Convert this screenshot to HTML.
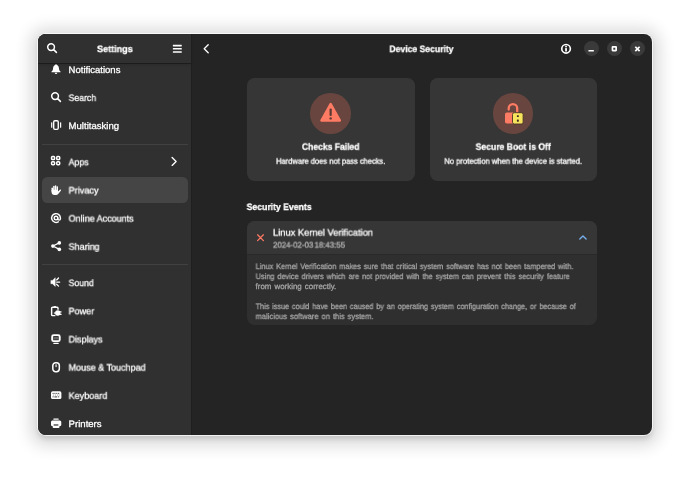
<!DOCTYPE html>
<html lang="en">
<head>
<meta charset="utf-8">
<title>Settings - Device Security</title>
<style>
html,body{margin:0;padding:0;background:#fff;}
body{width:690px;height:477px;position:relative;overflow:hidden;font-family:"Liberation Sans",sans-serif;}
#win{position:absolute;left:38px;top:33.8px;width:614.2px;height:400.8px;border-radius:8px;overflow:hidden;background:#242424;}
#shadow{position:absolute;left:38px;top:33.8px;width:614.2px;height:400.8px;border-radius:8px;
 box-shadow:0 0 0 1px rgba(255,255,255,.75),0 3.8px 4.8px 0 rgba(0,0,0,.116),0 2.3px 15.8px 8px rgba(0,0,0,.143);}
#side{position:absolute;left:0;top:0;width:153.3px;height:100%;background:#303030;}
#sidehead{position:absolute;left:0;top:0;width:153.3px;height:29.2px;background:#303030;box-shadow:0 1px 0 rgba(0,0,0,.35), 0 2px 3px rgba(0,0,0,.12);}
.sep{position:absolute;left:4.2px;width:145.6px;height:1px;background:#414141;}
#sel{position:absolute;left:3.8px;top:143px;width:146.4px;height:26.2px;border-radius:5.5px;background:#454545;}
.card{position:absolute;background:#363636;border-radius:7.5px;}
.circle{position:absolute;width:40.5px;height:40.5px;border-radius:50%;background:#68463f;}
.wb{position:absolute;width:15px;height:15px;border-radius:50%;background:#3a3a3a;top:41.05px;}
#txt{position:absolute;left:0;top:0;width:690px;height:477px;}
.t{text-rendering:geometricPrecision;position:absolute;left:0;top:0;white-space:nowrap;transform-origin:0 0;will-change:transform;-webkit-text-stroke:0.3px currentColor;}
svg{position:absolute;overflow:visible;}
</style>
</head>
<body>
<div id="shadow"></div>
<div id="win">
  <div id="side">
    <div id="sel"></div>
    <div class="sep" style="top:110px"></div>
    <div class="sep" style="top:230.5px"></div>
    <div id="sidehead"></div>
    <div style="position:absolute;left:153.3px;top:0;width:0.7px;height:100%;background:#1f1f1f"></div>
  </div>
</div>
<!-- content cards (page coords) -->
<div class="card" style="left:247px;top:78.3px;width:167.6px;height:102.4px"></div>
<div class="card" style="left:429.6px;top:78.3px;width:167.2px;height:102.4px"></div>
<div class="circle" style="left:310.45px;top:93.1px"></div>
<div class="circle" style="left:492.8px;top:93.1px"></div>
<div class="card" style="left:247px;top:220.8px;width:349.8px;height:104.3px;background:#2f2f2f"></div>
<div class="card" style="left:247px;top:220.8px;width:349.8px;height:33.4px;border-radius:7.5px 7.5px 0 0"></div>
<div style="position:absolute;left:247px;top:254.2px;width:349.8px;height:0.9px;background:#292929"></div>
<div class="wb" style="left:583.5px"></div>
<div class="wb" style="left:606.8px"></div>
<div class="wb" style="left:630.1px"></div>
<svg style="left:50.70px;top:63.70px;width:10.02px;height:10.02px" viewBox="0 0 16 16" fill="#fff" stroke="none"><path d="M8 0.2 C8.9 0.2 9.4 0.9 9.4 1.5 C11.6 2.2 12.5 4.4 12.7 6.8 C12.9 9.8 13.5 10.9 15.2 12.1 V13.1 H0.8 V12.1 C2.5 10.9 3.1 9.8 3.3 6.8 C3.5 4.4 4.4 2.2 6.6 1.5 C6.6 0.9 7.1 0.2 8 0.2 Z"/><path d="M6 14 H10 A2 2 0 0 1 6 14 Z"/></svg>
<svg style="left:50.70px;top:91.90px;width:10.02px;height:10.02px" viewBox="0 0 16 16" fill="#fff" stroke="none"><circle cx="6.5" cy="6.5" r="5.4" fill="none" stroke="#fff" stroke-width="2.4"/><path d="M10.6 10.6 L15 15" stroke="#fff" stroke-width="2.4" stroke-linecap="round" fill="none"/></svg>
<svg style="left:50.70px;top:120.10px;width:10.02px;height:10.02px" viewBox="0 0 16 16" fill="#fff" stroke="none"><rect x="4.3" y="1.1" width="7.3" height="13.8" rx="2" fill="none" stroke="#fff" stroke-width="2.2"/><rect x="0.2" y="3.6" width="1.9" height="8.8" rx="0.9"/><rect x="14.4" y="3.6" width="1.9" height="8.8" rx="0.9"/></svg>
<svg style="left:50.70px;top:156.45px;width:10.02px;height:10.02px" viewBox="0 0 16 16" fill="#fff" stroke="none"><rect x="0.9" y="0.9" width="4.8" height="4.8" rx="1.5" fill="none" stroke="#fff" stroke-width="2.4"/><rect x="0.9" y="9.1" width="4.8" height="4.8" rx="1.5" fill="none" stroke="#fff" stroke-width="2.4"/><rect x="9.1" y="0.9" width="4.8" height="4.8" rx="1.5" fill="none" stroke="#fff" stroke-width="2.4"/><rect x="9.1" y="9.1" width="4.8" height="4.8" rx="1.5" fill="none" stroke="#fff" stroke-width="2.4"/></svg>
<svg style="left:50.70px;top:184.65px;width:10.02px;height:10.02px" viewBox="0 0 16 16" fill="#fff" stroke="none"><rect x="0.9" y="4" width="2.3" height="7" rx="1.15"/><rect x="3.5" y="1.3" width="2.3" height="9" rx="1.15"/><rect x="6.2" y="0.4" width="2.3" height="9" rx="1.15"/><rect x="8.9" y="1.8" width="2.3" height="9" rx="1.15"/><path d="M0.9 7.5 H11.2 V10.2 L14.3 7.6 C15.2 6.9 16.6 7.9 15.7 9 L11.5 14.3 C10.6 15.4 9.6 16 8 16 H5.5 C2.7 16 0.9 14 0.9 11.5 Z"/></svg>
<svg style="left:50.70px;top:212.85px;width:10.02px;height:10.02px" viewBox="0 0 16 16" fill="#fff" stroke="none"><path d="M11.6 14 A7 7 0 1 1 15 8 V9.3 A2.1 2.1 0 0 1 10.8 9.3 V8" fill="none" stroke="#fff" stroke-width="2.3" stroke-linecap="round"/><circle cx="8" cy="8" r="2.9" fill="none" stroke="#fff" stroke-width="2.2"/></svg>
<svg style="left:50.70px;top:241.05px;width:10.02px;height:10.02px" viewBox="0 0 16 16" fill="#fff" stroke="none"><circle cx="3" cy="8.1" r="2.9"/><circle cx="13.3" cy="3" r="2.9"/><circle cx="13.3" cy="13.4" r="2.9"/><path d="M13.3 3 L3 8.1 L13.3 13.4" fill="none" stroke="#fff" stroke-width="1.9"/></svg>
<svg style="left:50.70px;top:277.40px;width:10.02px;height:10.02px" viewBox="0 0 16 16" fill="#fff" stroke="none"><path d="M-0.2 5.4 H2.4 L6.8 1.1 V15.1 L2.4 10.8 H-0.2 Z" stroke="#fff" stroke-width="0.7" stroke-linejoin="round"/><path d="M9 4.7 L12 1.6 M9 8.1 H13.9 M9 11.5 L12 14.6" stroke="#fff" stroke-width="2" stroke-linecap="round" fill="none"/></svg>
<svg style="left:50.70px;top:305.60px;width:10.02px;height:10.02px" viewBox="0 0 16 16" fill="#fff" stroke="none"><path d="M4.2 0.2 H8 V2 H4.2 Z"/><path d="M11.2 6 V3.4 A1.4 1.4 0 0 0 9.8 2 H2.4 A1.4 1.4 0 0 0 1 3.4 V14 A1.4 1.4 0 0 0 2.4 15.4 H7" fill="none" stroke="#fff" stroke-width="2.3"/><circle cx="10.8" cy="11.2" r="4.3"/><rect x="12" y="8.3" width="5" height="2" rx="0.7"/><rect x="12" y="12.2" width="5" height="2" rx="0.7"/><rect x="4.6" y="10.3" width="3" height="1.9"/></svg>
<svg style="left:50.70px;top:333.80px;width:10.02px;height:10.02px" viewBox="0 0 16 16" fill="#fff" stroke="none"><rect x="1.9" y="1.8" width="12" height="9.6" rx="2.4" fill="none" stroke="#fff" stroke-width="3.1"/><rect x="4.6" y="4.6" width="6.6" height="4" fill="#fff" opacity="0.25"/><rect x="3.6" y="14" width="8.8" height="1.9" rx="0.6"/></svg>
<svg style="left:50.70px;top:362.00px;width:10.02px;height:10.02px" viewBox="0 0 16 16" fill="#fff" stroke="none"><rect x="2.9" y="1.1" width="10.4" height="14.4" rx="4.6" fill="none" stroke="#fff" stroke-width="2.4"/><rect x="7.2" y="3.6" width="1.8" height="4.6" rx="0.9"/></svg>
<svg style="left:50.70px;top:390.20px;width:10.02px;height:10.02px" viewBox="0 0 16 16" fill="#fff" stroke="none"><rect x="0" y="2" width="16.6" height="12.4" rx="2.6"/><rect x="2.6" y="4.6" width="1.4" height="1.8" fill="#303030"/><rect x="5.6" y="4.6" width="1.4" height="1.8" fill="#303030"/><rect x="8.6" y="4.6" width="1.4" height="1.8" fill="#303030"/><rect x="11.6" y="4.6" width="1.4" height="1.8" fill="#303030"/><rect x="3.6" y="7.4" width="1.3" height="1.3" fill="#303030" opacity="0.7"/><rect x="6.6" y="7.4" width="1.3" height="1.3" fill="#303030" opacity="0.7"/><rect x="9.6" y="7.4" width="1.3" height="1.3" fill="#303030" opacity="0.7"/><rect x="12.4" y="7.4" width="1.3" height="1.3" fill="#303030" opacity="0.7"/><rect x="2.6" y="10" width="1.4" height="1.8" fill="#303030"/><rect x="5.4" y="10.3" width="4.6" height="1.5" fill="#303030"/><rect x="11.6" y="10" width="1.4" height="1.8" fill="#303030"/></svg>
<svg style="left:50.70px;top:418.40px;width:10.02px;height:10.02px" viewBox="0 0 16 16" fill="#fff" stroke="none"><rect x="3.8" y="0.6" width="8.4" height="2.1" rx="0.5"/><path d="M2.2 3.9 H13.8 A2.4 2.4 0 0 1 16.4 6.3 V11 A1.6 1.6 0 0 1 14.8 12.6 H13.6 V14.2 A1.7 1.7 0 0 1 11.9 15.9 H4.3 A1.7 1.7 0 0 1 2.6 14.2 V12.6 H1.6 A1.6 1.6 0 0 1 0 11 V6.3 A2.4 2.4 0 0 1 2.2 3.9 Z"/><rect x="4.2" y="10.2" width="7.6" height="1.9" fill="#303030"/></svg>
<svg style="left:47.20px;top:43.45px;width:10.02px;height:10.02px" viewBox="0 0 16 16" fill="#fff" stroke="none"><circle cx="6.5" cy="6.5" r="5.4" fill="none" stroke="#fff" stroke-width="2.4"/><path d="M10.6 10.6 L15 15" stroke="#fff" stroke-width="2.4" stroke-linecap="round" fill="none"/></svg>
<svg style="left:0;top:0;width:690px;height:477px" viewBox="0 0 690 477"><rect x="172.85" y="44.85" width="8.95" height="1.55" rx="0.35" fill="#fff"/><rect x="172.85" y="48.05" width="8.95" height="1.55" rx="0.35" fill="#fff"/><rect x="172.85" y="51.3" width="8.95" height="1.55" rx="0.35" fill="#fff"/><path d="M208.2 44.7 L204.2 48.7 L208.2 52.7" fill="none" stroke="#fff" stroke-width="1.35" stroke-linecap="round" stroke-linejoin="round"/><path d="M172.1 157.5 L176.1 161.45 L172.1 165.4" fill="none" stroke="#fff" stroke-width="1.35" stroke-linecap="round" stroke-linejoin="round"/><path d="M579.8 238.95 L582.95 235.95 L586.1 238.95" fill="none" stroke="#78aeed" stroke-width="1.4" stroke-linecap="round" stroke-linejoin="round"/><path d="M257.6 234.8 L263.4 240.6 M263.4 234.8 L257.6 240.6" fill="none" stroke="#ff7b63" stroke-width="1.25" stroke-linecap="round" stroke-linejoin="round"/><circle cx="566.05" cy="48.75" r="4.3" fill="none" stroke="#fff" stroke-width="1.65"/><rect x="565.15" y="48" width="1.8" height="3.4" rx="0.5" fill="#fff"/><circle cx="566.05" cy="46.6" r="0.95" fill="#fff"/><rect x="588.4" y="50.1" width="5.5" height="1.4" rx="0.3" fill="#fff"/><rect x="612.45" y="46.95" width="3.7" height="3.7" rx="0.3" fill="none" stroke="#fff" stroke-width="1.7"/><path d="M635.3 46.75 L639.6 51.05 M639.6 46.75 L635.3 51.05" fill="none" stroke="#fff" stroke-width="1.75" stroke-linecap="butt" stroke-linejoin="round"/><path d="M330.65 103.9 L340 120.6 H321.3 Z" fill="#ff7b63" stroke="#ff7b63" stroke-width="2.2" stroke-linejoin="round"/><rect x="329.55" y="108.6" width="2.2" height="7.3" rx="0.9" fill="#5a3a33"/><circle cx="330.65" cy="118.4" r="1.2" fill="#5a3a33"/><path d="M508.7 109.6 V108.4 A4.25 4.25 0 0 1 517.2 108.4 V113" fill="none" stroke="#ff7b63" stroke-width="2.3" stroke-linecap="round"/><rect x="505" y="112.6" width="12" height="11" rx="1.8" fill="#ff7b63"/><rect x="512.5" y="112.7" width="10.6" height="11.3" rx="1.8" fill="#f8e45c" stroke="#4a3328" stroke-width="0.9"/><rect x="516.9" y="115.2" width="1.9" height="1.9" rx="0.4" fill="#3b2a22"/><rect x="516.9" y="119.6" width="1.9" height="2.1" rx="0.4" fill="#3b2a22"/></svg>
<div id="txt">
<header>
<div class="t" style="transform:translate(97.00px,42.10px) scaleX(0.9680);word-spacing:0em;font-size:9.4px;line-height:13px;font-weight:700;color:#ffffff">Settings</div>
<div class="t" style="transform:translate(389.45px,42.10px) scaleX(0.9178);word-spacing:0em;font-size:9.4px;line-height:13px;font-weight:700;color:#ffffff">Device Security</div>
</header>
<nav>
<div class="t" style="transform:translate(68.60px,62.70px) scaleX(1.0141);word-spacing:0em;font-size:9.4px;line-height:13px;font-weight:400;color:#ffffff">Notifications</div>
<div class="t" style="transform:translate(68.60px,90.90px) scaleX(0.9253);word-spacing:0em;font-size:9.4px;line-height:13px;font-weight:400;color:#ffffff">Search</div>
<div class="t" style="transform:translate(68.60px,118.90px) scaleX(1.0182);word-spacing:0em;font-size:9.4px;line-height:13px;font-weight:400;color:#ffffff">Multitasking</div>
<div class="t" style="transform:translate(68.60px,155.30px) scaleX(0.9357);word-spacing:0em;font-size:9.4px;line-height:13px;font-weight:400;color:#ffffff">Apps</div>
<div class="t" style="transform:translate(68.60px,183.50px) scaleX(0.9761);word-spacing:0em;font-size:9.4px;line-height:13px;font-weight:400;color:#ffffff">Privacy</div>
<div class="t" style="transform:translate(68.60px,211.60px) scaleX(0.9594);word-spacing:0em;font-size:9.4px;line-height:13px;font-weight:400;color:#ffffff">Online Accounts</div>
<div class="t" style="transform:translate(68.60px,239.80px) scaleX(0.9589);word-spacing:0em;font-size:9.4px;line-height:13px;font-weight:400;color:#ffffff">Sharing</div>
<div class="t" style="transform:translate(68.60px,276.10px) scaleX(0.9222);word-spacing:0em;font-size:9.4px;line-height:13px;font-weight:400;color:#ffffff">Sound</div>
<div class="t" style="transform:translate(68.60px,304.30px) scaleX(0.9594);word-spacing:0em;font-size:9.4px;line-height:13px;font-weight:400;color:#ffffff">Power</div>
<div class="t" style="transform:translate(68.60px,332.50px) scaleX(0.9594);word-spacing:0em;font-size:9.4px;line-height:13px;font-weight:400;color:#ffffff">Displays</div>
<div class="t" style="transform:translate(68.60px,360.60px) scaleX(0.9614);word-spacing:0em;font-size:9.4px;line-height:13px;font-weight:400;color:#ffffff">Mouse &amp; Touchpad</div>
<div class="t" style="transform:translate(68.60px,388.80px) scaleX(0.9641);word-spacing:0em;font-size:9.4px;line-height:13px;font-weight:400;color:#ffffff">Keyboard</div>
<div class="t" style="transform:translate(68.60px,417.00px) scaleX(1.0213);word-spacing:0em;font-size:9.4px;line-height:13px;font-weight:400;color:#ffffff">Printers</div>
</nav>
<main>
<div class="t" style="transform:translate(301.95px,139.80px) scaleX(0.9118);word-spacing:0em;font-size:9.4px;line-height:13px;font-weight:700;color:#ffffff">Checks Failed</div>
<div class="t" style="transform:translate(276.05px,155.80px) scaleX(0.9308);word-spacing:0em;font-size:8.1px;line-height:11px;font-weight:400;color:#ffffff">Hardware does not pass checks.</div>
<div class="t" style="transform:translate(475.60px,139.80px) scaleX(0.9194);word-spacing:0em;font-size:9.4px;line-height:13px;font-weight:700;color:#ffffff">Secure Boot is Off</div>
<div class="t" style="transform:translate(444.35px,155.80px) scaleX(0.9417);word-spacing:0em;font-size:8.1px;line-height:11px;font-weight:400;color:#ffffff">No protection when the device is started.</div>
<div class="t" style="transform:translate(246.60px,200.00px) scaleX(0.9238);word-spacing:0em;font-size:9.4px;line-height:13px;font-weight:700;color:#ffffff">Security Events</div>
<div class="t" style="transform:translate(273.00px,225.60px) scaleX(0.9941);word-spacing:0em;font-size:9.4px;line-height:13px;font-weight:400;color:#ffffff">Linux Kernel Verification</div>
<div class="t" style="transform:translate(273.00px,239.60px) scaleX(0.9705);word-spacing:-0.12em;font-size:8.1px;line-height:11px;font-weight:400;color:#b6b6b6">2024-02-03 18:43:55</div>
<div class="t" style="transform:translate(255.60px,261.00px) scaleX(0.9321);word-spacing:0.12em;font-size:7.9px;line-height:11px;font-weight:400;color:#a4a4a4">Linux Kernel Verification makes sure that critical system software has not been tampered with.</div>
<div class="t" style="transform:translate(255.60px,271.00px) scaleX(0.9337);word-spacing:0.12em;font-size:7.9px;line-height:11px;font-weight:400;color:#a4a4a4">Using device drivers which are not provided with the system can prevent this security feature</div>
<div class="t" style="transform:translate(255.60px,281.00px) scaleX(1.0003);word-spacing:0.12em;font-size:7.9px;line-height:11px;font-weight:400;color:#a4a4a4">from working correctly.</div>
<div class="t" style="transform:translate(255.60px,301.00px) scaleX(0.9199);word-spacing:0.12em;font-size:7.9px;line-height:11px;font-weight:400;color:#a4a4a4">This issue could have been caused by an operating system configuration change, or because of</div>
<div class="t" style="transform:translate(255.60px,311.00px) scaleX(0.9553);word-spacing:0.12em;font-size:7.9px;line-height:11px;font-weight:400;color:#a4a4a4">malicious software on this system.</div>
</main>
</div>
</body>
</html>
